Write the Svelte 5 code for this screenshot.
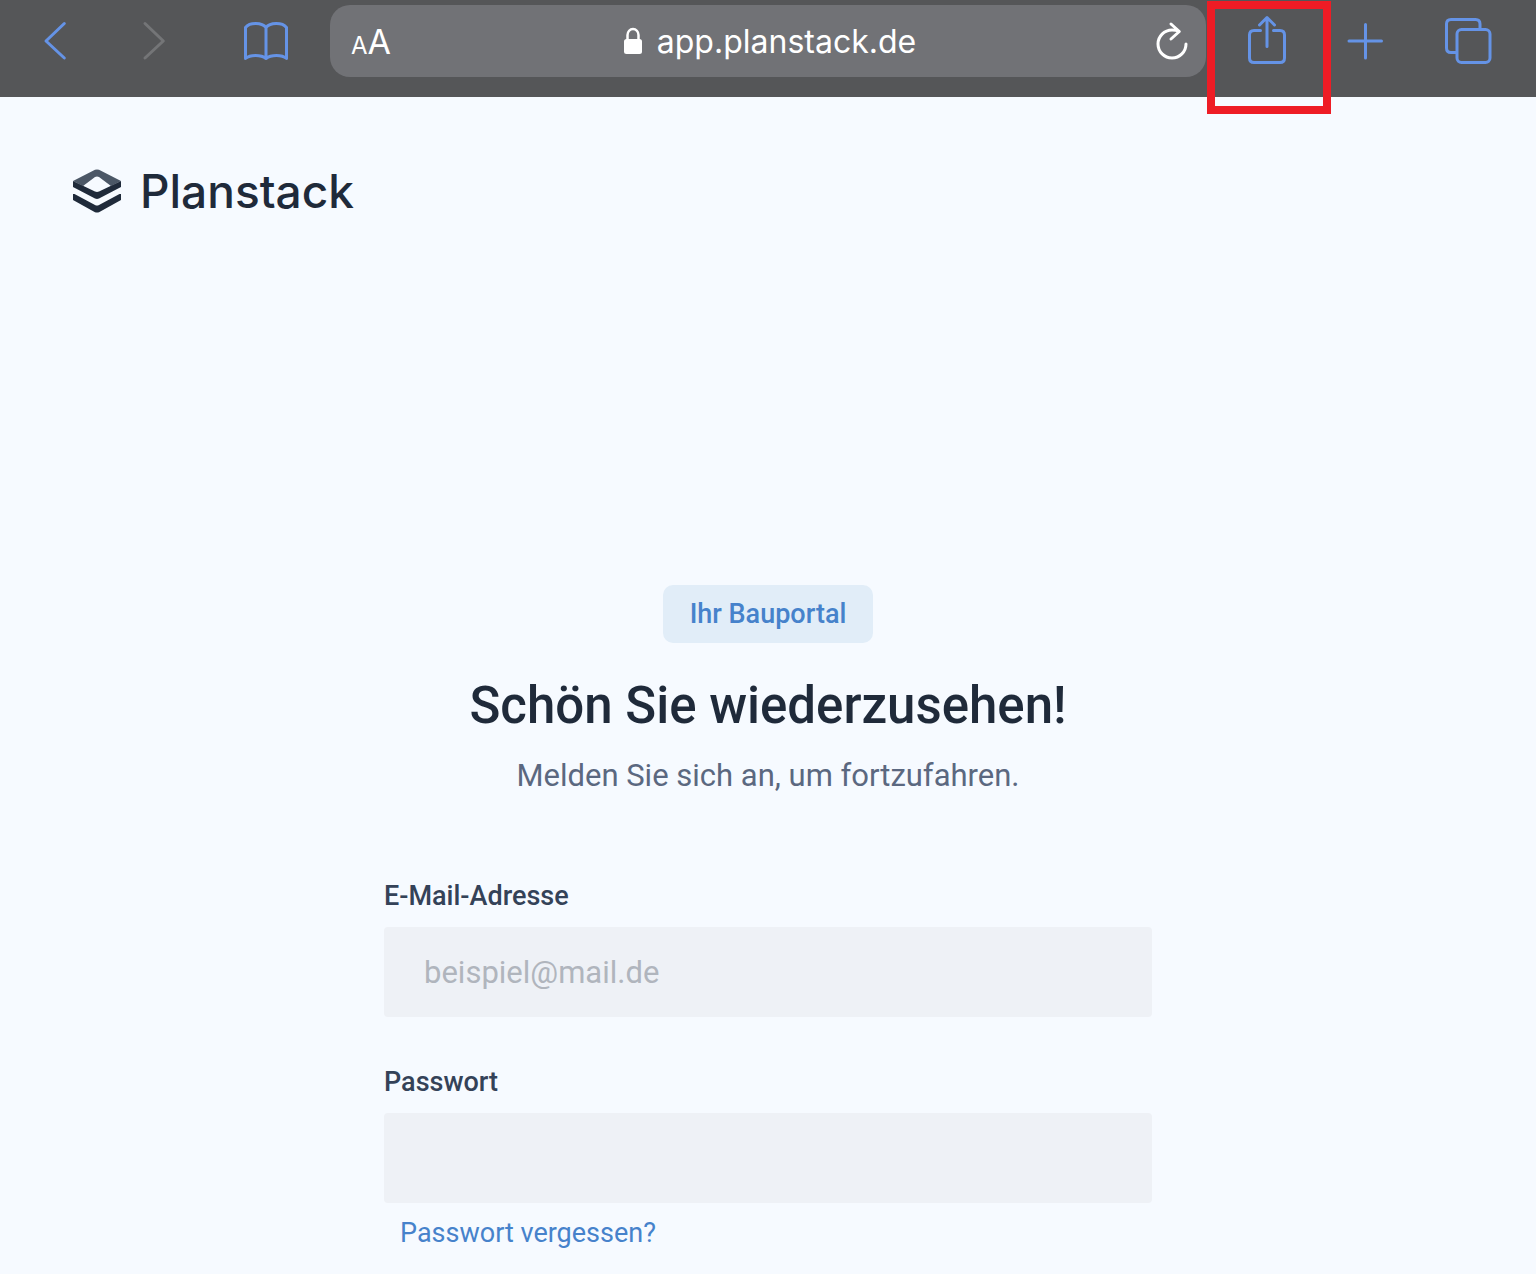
<script lang="ts">
    let email = $state("");
    let password = $state("");

    function handleSubmit(event: Event) {
        event.preventDefault();
    }
</script>

<header class="toolbar">
    <nav class="toolbar-nav">
        <button class="tool" aria-label="Zurück">
            <svg width="22" height="48" viewBox="0 0 22 48">
                <path d="M20.3 6.5 2 24 20.3 41" />
            </svg>
        </button>
        <button class="tool disabled" aria-label="Vorwärts" disabled>
            <svg width="22" height="48" viewBox="0 0 22 48">
                <path d="M2 6.5 20.3 24 2 41" />
            </svg>
        </button>
        <button class="tool" aria-label="Lesezeichen">
            <svg width="48" height="48" viewBox="-1 0 48 48">
                <path d="M23 10.5C19 5.500 7 5 2.500 10.500V41.500C7 37.500 18 37.500 23 41.500C28 37.500 39 37.500 43.500 41.500V10.500C39 5 27 5.500 23 10.500V41" />
            </svg>
        </button>
    </nav>

    <div class="address-bar">
        <button class="text-size" aria-label="Textgröße"><span class="small">A</span>A</button>
        <div class="address">
            <svg width="20" height="28" viewBox="0 0 20 28">
                <rect x="1" y="12" width="18" height="15" rx="2.500" fill="#fff" />
                <path d="M4.500 13V8a5.500 6 0 0 1 11 0v5" fill="none" stroke="#fff" stroke-width="2.500" />
            </svg>
            <span>app.planstack.de</span>
        </div>
        <button class="tool reload" aria-label="Neu laden">
            <svg width="32" height="48" viewBox="0 0 32 48">
                <path d="M30 27A14 14 0 1 1 16 13Q20 13 23 14.500M15 7 23.300 14.500 15 22" />
            </svg>
        </button>
    </div>

    <div class="toolbar-actions">
        <button class="tool share" aria-label="Teilen">
            <svg width="38" height="48" viewBox="0 0 38 48">
                <path d="M12.500 13.500H6Q1.500 13.500 1.500 18V41Q1.500 45.500 6 45.500H32Q36.500 45.500 36.500 41V18Q36.500 13.500 32 13.500H25.500M19 29.500V1M11.500 8 19 .500 26.500 8" />
            </svg>
            <span class="marker"></span>
        </button>
        <button class="tool" aria-label="Neuer Tab">
            <svg width="36" height="48" viewBox="0 0 36 48">
                <path d="M2 24H34.500M18.500 7.500V41" />
            </svg>
        </button>
        <button class="tool" aria-label="Tabs">
            <svg width="48" height="48" viewBox="0 0 48 48">
                <rect x="13" y="12.500" width="33" height="33" rx="4.500" />
                <path d="M36 12V7Q36 2.500 31.500 2.500H7Q2.500 2.500 2.500 7V31Q2.500 35.500 7 35.500H12.500" />
            </svg>
        </button>
    </div>
</header>

<div class="page">
    <a class="logo" href="/">
        <svg width="48" height="44" viewBox="0 0 48 44">
            <path d="M0 12 22 .8Q24 0 26 .8L48 12 38 17 26 7.900Q24 7 22 7.900L10 17Z" fill="#4b5766" />
            <path d="M0 12 22 22.600Q24 23.500 26 22.600L48 12V18L26 29.600Q24 30.500 22 29.600L0 18Z" fill="#1f2a3a" />
            <path d="M0 25H1.500L22 36Q24 37 26 36L46.500 25H48V31L26 43.200Q24 44 22 43.200L0 31Z" fill="#1f2a3a" />
        </svg>
        <span>Planstack</span>
    </a>

    <main class="login">
        <span class="badge">Ihr Bauportal</span>
        <h1>Schön Sie wiederzusehen!</h1>
        <p class="subtitle">Melden Sie sich an, um fortzufahren.</p>

        <form onsubmit={handleSubmit}>
            <label for="email">E-Mail-Adresse</label>
            <input id="email" type="email" placeholder="beispiel@mail.de" bind:value={email} />
            <label for="password">Passwort</label>
            <input id="password" type="password" bind:value={password} />
            <a class="forgot" href="/passwort-vergessen">Passwort vergessen?</a>
        </form>
    </main>
</div>

<style>
    :global(body) {
        margin: 0;
        background: #f6faff;
        font-family: Roboto, "Liberation Sans", sans-serif;
    }

    button {
        padding: 0;
        border: none;
        background: none;
        font-family: inherit;
        cursor: pointer;
    }

    svg {
        display: block;
        flex-shrink: 0;
    }

    .toolbar {
        display: flex;
        align-items: center;
        padding: 5px 44px 20px;
        background: #555658;
        font-family: Inter, "Liberation Sans", sans-serif;
    }

    .toolbar-nav {
        display: flex;
        gap: 77px;
        margin-right: 40px;
    }

    .toolbar-actions {
        display: flex;
        gap: 61px;
        margin-left: 42px;
    }

    .tool svg {
        overflow: visible;
        fill: none;
        stroke: #6593e6;
        stroke-width: 3;
        stroke-linecap: round;
        stroke-linejoin: round;
    }

    .tool.disabled svg {
        stroke: #747577;
    }

    .tool.reload svg {
        stroke: #fff;
    }

    .address-bar {
        flex: 1;
        display: grid;
        grid-template-columns: 1fr auto 1fr;
        align-items: center;
        height: 72px;
        padding: 0 18px 0 21px;
        border-radius: 20px;
        background: #717276;
        color: #fff;
    }

    .text-size {
        justify-self: start;
        color: #fff;
        font-size: 34px;
    }

    .text-size .small {
        font-size: 24px;
    }

    .address {
        display: flex;
        align-items: center;
        gap: 14px;
        font-size: 32px;
    }

    .reload {
        justify-self: end;
    }

    .share {
        position: relative;
    }

    /* red frame around the share button */
    .marker {
        position: absolute;
        top: -16px;
        left: -41px;
        width: 108px;
        height: 97px;
        border: 8px solid #ee1c25;
        pointer-events: none;
    }

    .page {
        padding: 72px 73px;
    }

    .logo {
        display: inline-flex;
        align-items: center;
        gap: 19px;
        color: #1f2a3a;
        font-family: Inter, "Liberation Sans", sans-serif;
        font-size: 46px;
        font-weight: 500;
        line-height: 44px;
        text-decoration: none;
    }

    .login {
        display: flex;
        flex-direction: column;
        align-items: center;
        width: 50vw;
        margin: 368px auto 0;
    }

    .badge {
        padding: 0 27px;
        border-radius: 10px;
        background: #e1edf8;
        color: #4682cb;
        font-size: 27px;
        font-weight: 500;
        line-height: 58px;
    }

    h1 {
        margin: 31px 0 0;
        color: #1f2a3a;
        font-size: 51px;
        font-weight: 500;
        line-height: 64px;
        white-space: nowrap;
    }

    .subtitle {
        margin: 18px 0 0;
        color: #5b6880;
        font-size: 31px;
        line-height: 40px;
    }

    form {
        display: flex;
        flex-direction: column;
        width: 100%;
        margin-top: 80px;
    }

    label {
        margin-bottom: 11px;
        color: #344258;
        font-size: 27px;
        font-weight: 500;
        line-height: 40px;
    }

    input {
        box-sizing: border-box;
        width: 100%;
        height: 90px;
        margin-bottom: 45px;
        padding: 0 40px;
        border: none;
        border-radius: 4px;
        background: #eef1f6;
        color: #344258;
        font-family: inherit;
        font-size: 31px;
    }

    input:last-of-type {
        margin-bottom: 10px;
    }

    input::placeholder {
        color: #b0b5bd;
    }

    .forgot {
        align-self: flex-start;
        margin-left: 16px;
        color: #4682cb;
        font-size: 27px;
        line-height: 40px;
        text-decoration: none;
    }
</style>
